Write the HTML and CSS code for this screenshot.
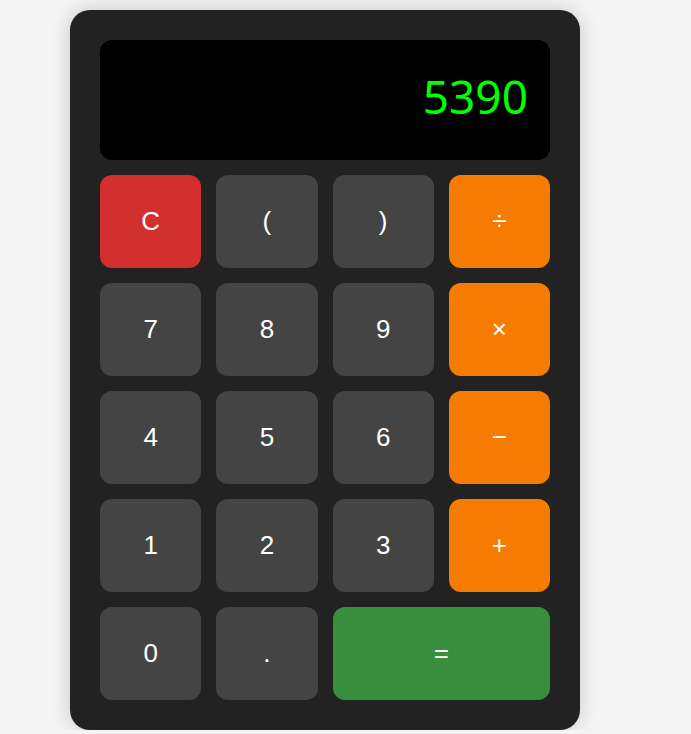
FILE: index.html
```html
<!DOCTYPE html>
<html lang="en">
<head>
<meta charset="utf-8">
<title>Calculator</title>
<link rel="stylesheet" href="styles.css">
</head>
<body>
<div class="calc">
  <div class="display">5390</div>
  <div class="keys">
    <button class="key clear">C</button>
    <button class="key">(</button>
    <button class="key">)</button>
    <button class="key op">÷</button>
    <button class="key">7</button>
    <button class="key">8</button>
    <button class="key">9</button>
    <button class="key op">×</button>
    <button class="key">4</button>
    <button class="key">5</button>
    <button class="key">6</button>
    <button class="key op">−</button>
    <button class="key">1</button>
    <button class="key">2</button>
    <button class="key">3</button>
    <button class="key op">+</button>
    <button class="key">0</button>
    <button class="key">.</button>
    <button class="key equals">=</button>
  </div>
</div>
</body>
</html>
```
FILE: styles.css
```css
html, body {
  margin: 0;
  background: #f4f4f4;
}
body {
  padding: 10px 0 0 70px;
  font-family: "Liberation Sans", Arial, sans-serif;
}
.calc {
  width: 450px;
  padding: 30px;
  background: #222222;
  border-radius: 20px;
  box-shadow: 0 0 20px rgba(0, 0, 0, 0.18);
}
.display {
  height: 120px;
  box-sizing: border-box;
  background: #000;
  border-radius: 12px;
  color: #00ff00;
  font-family: "Noto Sans", sans-serif;
  font-size: 46px;
  display: flex;
  align-items: center;
  justify-content: flex-end;
  padding: 0 22px 8px;
  margin-bottom: 15px;
}
.keys {
  display: grid;
  grid-template-columns: repeat(4, 1fr);
  gap: 15px;
}
.key {
  height: 93px;
  border: none;
  border-radius: 12px;
  background: #444444;
  color: #fff;
  font-family: "Liberation Sans", Arial, sans-serif;
  font-size: 26px;
  padding: 0;
}
.clear { background: #d32f2f; }
.op { background: #f57c00; }
.equals { background: #388e3c; grid-column: span 2; }
```
